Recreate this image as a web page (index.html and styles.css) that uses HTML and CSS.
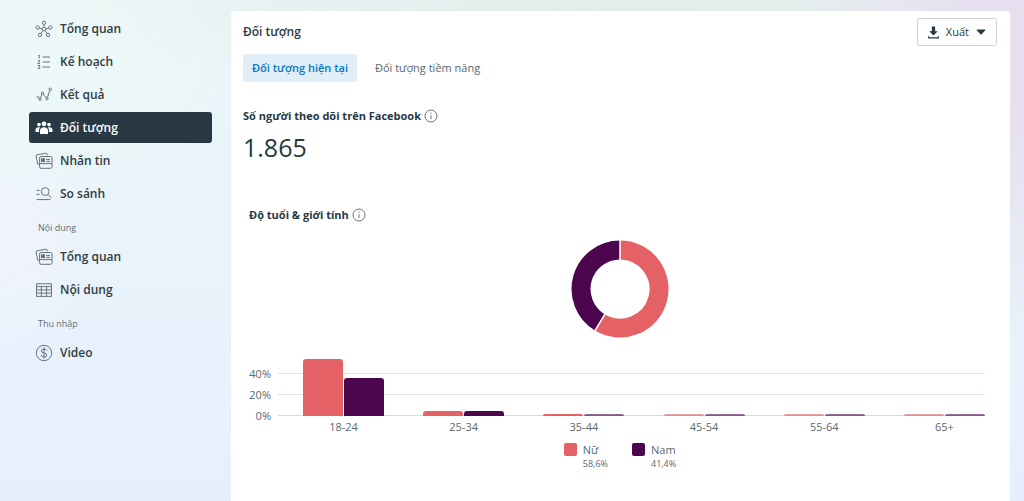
FILE: index.html
```html
<!DOCTYPE html>
<html lang="vi">
<head>
<meta charset="utf-8">
<meta name="viewport" content="width=device-width, initial-scale=1">
<title>Đối tượng</title>
<link rel="stylesheet" href="styles.css">
</head>
<body>
<svg class="sprite" aria-hidden="true">
  <symbol id="cards" viewBox="0 0 18 18">
    <path d="M3.8 12.2 2.6 12 1.1 4 Q1 3 2 2.7 L11 1.3 Q12 1.2 12.2 2.2 L12.3 3.4"/>
    <rect x="4.6" y="4.5" width="12.4" height="11.8" rx="1.5"/>
    <path d="M4.6 11.6h12.4M11 7.4h4M11 9.4h4"/>
    <rect x="6.5" y="6.8" width="3" height="2.8" fill="currentColor"/>
  </symbol>
  <symbol id="info" viewBox="0 0 14 14">
    <circle cx="7" cy="7" r="6"/>
    <path d="M7 6.2v4M7 3.6v1.2"/>
  </symbol>
</svg>
<div class="app">
  <nav class="sidebar" aria-label="Menu">
    <a class="item" href="#">
      <svg class="icon" viewBox="0 0 18 18"><path d="M9 4.5v2M7.2 9 4.1 8M10.8 9l3.1-1M7.9 10.6 6 13.4M10.1 10.6l1.9 2.8"/><circle cx="9" cy="8.9" r="1.9"/><circle cx="9" cy="2.8" r="1.7"/><circle cx="2.6" cy="7.5" r="1.7"/><circle cx="15.4" cy="7.5" r="1.7"/><circle cx="5" cy="14.9" r="1.7"/><circle cx="13" cy="14.9" r="1.7"/></svg>
      Tổng quan</a>
    <a class="item" href="#">
      <svg class="icon" viewBox="0 0 18 18"><path d="M7.5 4H15M7.5 9H15M7.5 14H15M3 3l1.2-.8v3.4M2.8 7.7q1.8-1 2 .3 0 .8-2.2 2.6h2.4M2.8 12.5h2L3.7 13.8q1.5 0 1.3 1.3-.4 1-2.3.5"/></svg>
      Kế hoạch</a>
    <a class="item" href="#">
      <svg class="icon" viewBox="0 0 18 18"><path d="M1.3 11.6 2.8 10.2 4.4 12.3M5.5 12 7 8.2M8.2 8.2l3 3.6M12.4 11.4 14.7 4.6"/><circle cx="5" cy="13.2" r="1.2"/><circle cx="7.5" cy="7.2" r="1.2"/><circle cx="12" cy="12.7" r="1.2"/><circle cx="15.2" cy="3.3" r="1.2"/></svg>
      Kết quả</a>
    <a class="item item-active" href="#" aria-current="page">
      <svg class="icon icon-solid" viewBox="0 0 18 18"><circle cx="9" cy="4.8" r="2.4"/><circle cx="4" cy="5.6" r="1.8"/><circle cx="14" cy="5.6" r="1.8"/><path d="M5 15v-3.2Q5 8.2 9 8.2t4 3.6V15ZM.5 13v-2Q.6 8.3 3.5 8.2q1 0 1.6.4Q3.8 10 3.9 13ZM17.5 13v-2q-.1-2.7-3-2.8-1 0-1.6.4 1.3 1.4 1.2 4.4Z"/></svg>
      Đối tượng</a>
    <a class="item" href="#"><svg class="icon"><use href="#cards"/></svg>Nhắn tin</a>
    <a class="item" href="#">
      <svg class="icon" viewBox="0 0 18 18"><circle cx="10.2" cy="6.6" r="3.9"/><path d="M13 9.4 16.4 12.8M1.5 5.4h3M1.5 9.4h3M1.5 14.6h14"/></svg>
      So sánh</a>
    <h2 class="group">Nội dung</h2>
    <a class="item" href="#"><svg class="icon"><use href="#cards"/></svg>Tổng quan</a>
    <a class="item" href="#">
      <svg class="icon" viewBox="0 0 18 18"><path d="M1.5 2.8h15v12.6h-15ZM1.5 5.6h15M1.5 8.9h15M1.5 12.1h15M6.3 5.6v9.8M11.6 5.6v9.8"/></svg>
      Nội dung</a>
    <h2 class="group">Thu nhập</h2>
    <a class="item" href="#">
      <svg class="icon" viewBox="0 0 18 18"><circle cx="9" cy="9" r="7.7"/><path d="M11.8 6.6Q11.4 5 9 5T6.3 6.8Q6.3 8.4 9 8.9t2.8 2.2Q11.8 13 9 13t-2.9-1.8M9 3.4v11.2"/></svg>
      Video</a>
  </nav>

  <main class="card">
    <header class="card-head">
      <h1 class="title">Đối tượng</h1>
      <button class="export" type="button">
        <svg class="icon-export" viewBox="0 0 12 14"><path d="M4.2 .5h3.6v5h2.8L6 10.4 1.4 5.5h2.8Z"/><path d="M.8 11v1.8h10.4V11" class="tray"/></svg>
        Xuất
        <svg class="icon-caret" viewBox="0 0 10 6"><path d="M1.2.5h7.6q.9.3.3 1.1L5.6 5.3q-.6.5-1.2 0L.9 1.6Q.3.8 1.2.5Z"/></svg>
      </button>
    </header>
    <div class="tabs" role="tablist">
      <button class="tab tab-active" type="button" role="tab" aria-selected="true">Đối tượng hiện tại</button>
      <button class="tab" type="button" role="tab" aria-selected="false">Đối tượng tiềm năng</button>
    </div>

    <section class="followers">
      <h2 class="metric">Số người theo dõi trên Facebook <svg class="icon-info"><use href="#info"/></svg></h2>
      <p class="total">1.865</p>
    </section>

    <section class="demographics">
      <h2 class="metric">Độ tuổi &amp; giới tính <svg class="icon-info"><use href="#info"/></svg></h2>
      <svg class="donut" viewBox="-50 -50 100 100" role="img" aria-label="Nữ 58,6%, Nam 41,4%">
        <path class="ring ring-women" d="M0-39A39 39 0 1 1-20.1 33.4"/>
        <path class="ring ring-men" d="M-20.1 33.4A39 39 0 0 1 0-39"/>
        <path class="split" d="M0-50V-28M-25.8 42.8-14.4 24"/>
      </svg>

      <div class="chart">
        <div class="scale"><span>40%</span><span>20%</span><span>0%</span></div>
        <div class="plot">
          <div class="bars">
            <div class="pair"><i class="bar women" style="height:57px"></i><i class="bar men" style="height:38px"></i></div>
            <div class="pair"><i class="bar women" style="height:5px"></i><i class="bar men" style="height:5px"></i></div>
            <div class="pair"><i class="bar women" style="height:2px"></i><i class="bar men faint" style="height:2px"></i></div>
            <div class="pair"><i class="bar women faint" style="height:2px"></i><i class="bar men faint" style="height:2px"></i></div>
            <div class="pair"><i class="bar women faint" style="height:2px"></i><i class="bar men faint" style="height:2px"></i></div>
            <div class="pair"><i class="bar women faint" style="height:2px"></i><i class="bar men faint" style="height:2px"></i></div>
          </div>
          <div class="ages"><span>18-24</span><span>25-34</span><span>35-44</span><span>45-54</span><span>55-64</span><span>65+</span></div>
        </div>
      </div>

      <ul class="legend">
        <li class="key"><i class="swatch women"></i><span class="key-name">Nữ<small>58,6%</small></span></li>
        <li class="key"><i class="swatch men"></i><span class="key-name">Nam<small>41,4%</small></span></li>
      </ul>
    </section>
  </main>
</div>
</body>
</html>
```
FILE: styles.css
```css
* { box-sizing: border-box; }

body {
  margin: 0;
  min-height: 100vh;
  font: 11px/16px "Open Sans", "Noto Sans", sans-serif;
  color: #5b6770;
  background:
    radial-gradient(ellipse 240px 300px at 100% 10%, #e6dff0 20%, #e6dff000),
    radial-gradient(ellipse 600px 110px at 62% 0, #e5edeb 10%, #e5edeb00),
    radial-gradient(ellipse 260px 170px at 4% 10%, #edf9f8 20%, #edf9f800),
    radial-gradient(ellipse 100px 130px at 0 46%, #f3f4fc, #f3f4fc00),
    linear-gradient(#e8f4f7, #e8f3fb 50%, #e7effe);
}

h1, h2, p, ul { margin: 0; padding: 0; }

.sprite { position: absolute; width: 0; height: 0; }

svg { fill: none; stroke: currentColor; flex: none; }

.app { display: flex; gap: 19px; min-height: 100vh; padding: 11px 14px 0 29px; }

.sidebar { display: flex; flex-direction: column; gap: 2px; width: 183px; flex: none; padding-top: 2px; }

.item {
  display: flex;
  align-items: center;
  gap: 7px;
  height: 31px;
  padding: 0 6px;
  border-radius: 3px;
  font-size: 12px;
  font-weight: 600;
  color: #303b43;
  text-decoration: none;
}

.item-active { background: #283943; color: #fff; }

.icon { width: 18px; height: 18px; color: #68737a; }
.icon-solid { color: #fff; fill: #fff; stroke: none; }

.group { margin: 9px 0 3px; padding-left: 9px; font-size: 9px; line-height: 16px; font-weight: 400; color: #626c73; }

.card { flex: 1; min-width: 0; padding: 7px 13px 24px 12px; background: #fff; border-radius: 3px 3px 0 0; }

.card-head { display: flex; justify-content: space-between; align-items: center; }

.title { font-size: 12px; font-weight: 600; color: #283943; }

.export {
  display: flex;
  align-items: center;
  gap: 7px;
  height: 28px;
  padding: 0 10px;
  border: 1px solid #cbd2d9;
  border-radius: 3px;
  background: #fff;
  font: inherit;
  color: #283943;
}

.icon-export { width: 11px; height: 13px; fill: currentColor; stroke: none; }
.tray { fill: none; stroke: currentColor; stroke-width: 1.3; }
.icon-caret { width: 10px; height: 6px; fill: currentColor; stroke: none; }

.tabs { display: flex; gap: 9px; margin-top: 8px; }

.tab { height: 28px; padding: 0 9px; border: 0; border-radius: 3px; background: none; font: inherit; color: #5b6770; }
.tab-active { background: #e1edf7; color: #0a78be; font-weight: 600; }

.followers { margin-top: 26px; }

.metric { display: flex; align-items: center; gap: 3px; font-size: 11px; line-height: 16px; font-weight: 700; color: #283943; }

.icon-info { width: 14px; height: 14px; color: #68737a; }

.total { margin-top: 7px; font-size: 25px; line-height: 32px; color: #283943; }

.demographics { margin-top: 44px; padding: 0 6px; }

.donut { display: block; width: 100px; height: 100px; margin: 16px auto 0; }
.ring { stroke-width: 19; }
.ring-women { stroke: #e46266; }
.ring-men { stroke: #4b064e; }
.split { stroke: #fff; stroke-width: 1.5; }

.chart { display: flex; gap: 7px; margin: 19px 6px 0 0; }

.scale { display: flex; flex-direction: column; gap: 5px; width: 22px; padding-top: 8px; text-align: right; font-size: 11px; }

.scale span { display: flex; justify-content: flex-end; }

.plot { flex: 1; min-width: 0; }

.bars {
  display: flex;
  justify-content: space-between;
  height: 58px;
  padding-left: 25px;
  background:
    linear-gradient(#dde3e5, #dde3e5) 0 15px / 100% 1px no-repeat,
    linear-gradient(#dde3e5, #dde3e5) 0 36px / 100% 1px no-repeat,
    linear-gradient(#d3dcdf, #d3dcdf) 0 100% / 100% 1px no-repeat;
}

.pair { display: flex; align-items: flex-end; gap: 1px; width: 81px; }

.bar { flex: 1; border-radius: 3px 3px 0 0; }
.women { background: #e46266; }
.men { background: #4b064e; }
.faint { opacity: 0.6; }

.ages { display: flex; justify-content: space-between; margin-top: 3px; padding-left: 25px; }
.ages span { width: 81px; text-align: center; }

.legend { display: flex; justify-content: center; gap: 24px; margin-top: 7px; list-style: none; }

.key { display: flex; gap: 6px; }

.swatch { width: 13px; height: 13px; margin-top: 1px; border-radius: 2px; }

.key-name small { display: block; font-size: 9px; line-height: 12px; }
```
